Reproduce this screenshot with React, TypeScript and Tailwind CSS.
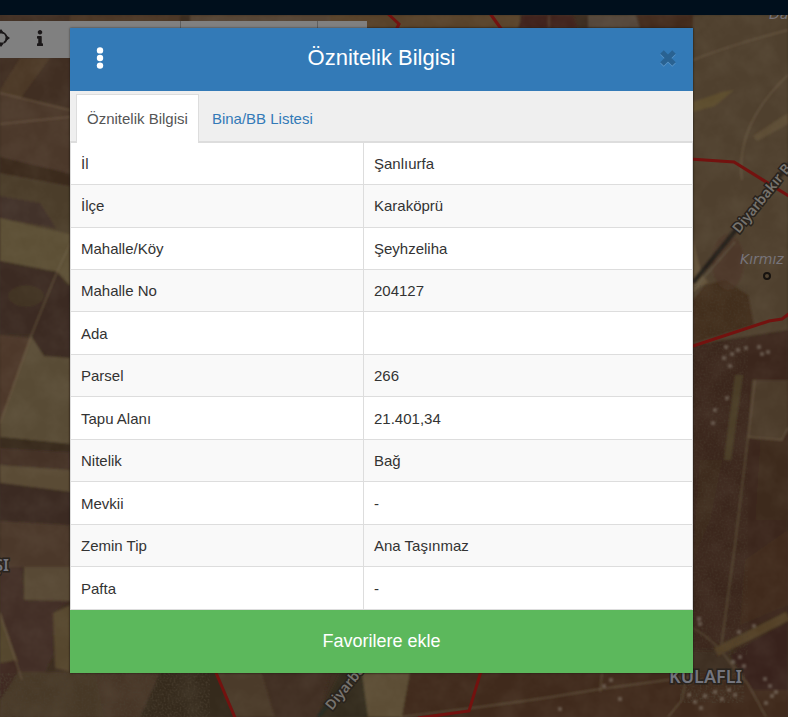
import React from 'react';
import { FaInfo } from 'react-icons/fa';

const attributes = [
  { label: 'İl', value: 'Şanlıurfa' },
  { label: 'İlçe', value: 'Karaköprü' },
  { label: 'Mahalle/Köy', value: 'Şeyhzeliha' },
  { label: 'Mahalle No', value: '204127' },
  { label: 'Ada', value: '' },
  { label: 'Parsel', value: '266' },
  { label: 'Tapu Alanı', value: '21.401,34' },
  { label: 'Nitelik', value: 'Bağ' },
  { label: 'Mevkii', value: '-' },
  { label: 'Zemin Tip', value: 'Ana Taşınmaz' },
  { label: 'Pafta', value: '-' },
];

const fields = [
  // west
  { points: '0,15 70,15 70,110 0,93', fill: '#402d21' },
  { points: '20,58 50,58 12,110 0,118 0,90', fill: '#4b3928' },
  { points: '0,93 70,110 70,174 0,157', fill: '#4b372a' },
  { points: '0,157 70,174 70,186 0,173', fill: '#3b291f' },
  { points: '0,173 70,186 70,234 0,218', fill: '#4c3c2b' },
  { points: '0,196 40,203 56,228 0,218', fill: '#43332a' },
  { points: '0,218 70,234 70,286 57,272 0,261', fill: '#5c4f36' },
  { points: '0,261 57,272 70,286 70,358 44,356 31,336 0,335', fill: '#3b2a20' },
  { points: '0,335 31,338 0,423', fill: '#4d3829' },
  { points: '31,336 44,356 70,358 70,444 0,437 0,423', fill: '#594b34' },
  { points: '0,437 70,444 70,452 0,448', fill: '#382b1e' },
  { points: '0,448 70,452 70,470 0,465', fill: '#453127' },
  { points: '0,465 70,470 70,492 0,483', fill: '#5a4c36' },
  { points: '0,483 70,492 70,525 0,521', fill: '#3b2a22' },
  { points: '0,521 70,525 70,567 0,567', fill: '#4c392a' },
  { points: '24,567 70,567 70,601 24,600', fill: '#594a35' },
  { points: '0,567 22,567 24,601 70,601 53,613 53,655 45,672 20,672 0,613', fill: '#422f25' },
  { points: '53,613 70,605 70,672 55,668', fill: '#56462f' },
  { points: '0,613 18,662 0,665', fill: '#55462f' },
  { points: '0,663 16,660 20,672 0,700', fill: '#3f2b20' },
  // south
  { points: '18,672 96,672 105,717 0,717 0,700', fill: '#473828' },
  { points: '95,673 178,673 145,717 105,717', fill: '#463527' },
  { points: '160,673 216,673 235,717 140,717', fill: '#352b1f' },
  { points: '216,673 262,673 275,717 235,717', fill: '#4c3a2a' },
  { points: '262,673 330,673 318,717 275,717', fill: '#412d21' },
  { points: '340,673 362,673 368,717 318,717', fill: '#302c1e' },
  { points: '362,673 410,673 402,717 368,717', fill: '#5b4e36' },
  { points: '410,673 788,673 788,717 402,717', fill: '#3f2b1e' },
  // north
  { points: '70,15 180,15 180,28 70,28', fill: '#4d3927' },
  { points: '190,15 330,15 330,28 190,28', fill: '#574534' },
  { points: '330,15 520,15 520,28 330,28', fill: '#58432c' },
  { points: '522,15 573,15 578,28 518,28', fill: '#40241a' },
  { points: '588,15 636,15 640,28 588,28', fill: '#54463a' },
  { points: '636,15 694,15 694,28 640,28', fill: '#432c1d' },
  // east
  { points: '693,15 788,15 788,330 693,345', fill: '#50412f' },
  { points: '693,102 722,92 734,90 715,106 693,112', fill: '#5d4d2f' },
  { points: '753,136 788,113 788,124 757,141', fill: '#5d4e35' },
  { points: '693,240 702,275 708,282 693,292', fill: '#64533a' },
  { points: '693,345 788,330 788,650 693,650', fill: '#3a281b' },
  { points: '705,285 725,280 748,295 754,325 693,343 693,300', fill: '#432d1d' },
  { points: '752,380 788,380 788,430 782,440 748,437', fill: '#4b3b2b' },
  { points: '735,375 743,375 731,460 724,460', fill: '#4c3c28' },
  { points: '700,460 722,460 710,520 693,560', fill: '#3e2b1c' },
  { points: '745,560 788,530 788,605 740,625', fill: '#412c1e' },
  { points: '760,440 788,440 788,520 755,520', fill: '#3d291c' },
  { points: '730,655 788,622 788,690 752,690', fill: '#38241b' },
];

const tracks = [
  'M0 93 L70 110',
  'M0 124 L70 117',
  'M70 244 L57 272 L31 336 L0 423',
  'M0 613 L22 680',
  'M549 15 V28',
  'M693 60 Q730 45 788 30',
  'M788 75 Q735 125 742 180',
  'M755 380 L748 437 L782 440 L788 428',
  'M748 437 L735 545 L721 648',
  'M693 628 Q716 641 732 665 L748 684 L766 717',
  'M400 717 Q520 703 600 689 L690 677',
  'M602 673 L600 692',
  'M685 685 L682 700 L668 717',
];

const houses = [
  [724, 345], [730, 352], [736, 348], [744, 346], [757, 345], [760, 352], [766, 350], [722, 356], [728, 364],
  [713, 408], [711, 421], [725, 396], [697, 617], [698, 622], [737, 630], [752, 624], [738, 655], [731, 660],
  [742, 664], [687, 693], [693, 700], [703, 694], [713, 690], [720, 697], [727, 688], [733, 693], [763, 677],
  [768, 684], [770, 694], [764, 701], [774, 690], [609, 678], [602, 684], [618, 697], [558, 707], [699, 706],
];

const SatelliteMap = () => (
  <svg
    className="absolute inset-0 h-full w-full bg-[#3d2e21]"
    viewBox="0 0 788 717"
    preserveAspectRatio="xMidYMid slice"
    aria-hidden="true"
  >
    <defs>
      <filter id="terrain" x="0" y="0" width="100%" height="100%">
        <feTurbulence type="fractalNoise" baseFrequency="0.04 0.04" numOctaves="4" seed="8" />
        <feColorMatrix values="0 0 0 0 0.42  0 0 0 0 0.37  0 0 0 0 0.27  0.9 0.5 0 0 -0.52" />
      </filter>
      <filter id="grain" x="0" y="0" width="100%" height="100%">
        <feTurbulence type="fractalNoise" baseFrequency="0.5" numOctaves="2" seed="3" />
        <feColorMatrix values="0 0 0 0 0.07  0 0 0 0 0.05  0 0 0 0 0.03  2.4 0 0 0 -0.98" />
      </filter>
      <filter id="soften">
        <feGaussianBlur stdDeviation="0.8" />
      </filter>
    </defs>

    <g filter="url(#soften)">
      {fields.map((field, index) => (
        <polygon key={index} points={field.points} fill={field.fill} />
      ))}
      <ellipse cx="26" cy="296" rx="18" ry="11" fill="#4c3e2c" opacity="0.3" />
      <ellipse cx="728" cy="262" rx="16" ry="28" fill="#4b3426" opacity="0.6" />
      {tracks.map((d) => (
        <path key={d} d={d} fill="none" stroke="#7a6850" strokeWidth="1.4" opacity="0.5" />
      ))}
      <path d="M716 652 L788 616" stroke="#523f26" strokeWidth="9" />
      <path d="M693 283 L790 163" stroke="#28241d" strokeWidth="5" />
      <path d="M693 290 L735 242" stroke="#68604f" strokeWidth="1" />
      <path d="M318 717 L362 664" stroke="#282b20" strokeWidth="4" />
    </g>

    <rect width="788" height="717" filter="url(#terrain)" opacity="0.15" />
    <rect y="673" width="210" height="44" filter="url(#grain)" opacity="0.7" />
    <rect x="693" y="285" width="55" height="370" filter="url(#grain)" opacity="0.4" />
    <rect x="680" y="673" width="65" height="30" filter="url(#grain)" opacity="0.8" />

    <g fill="#8b8174" opacity="0.5" filter="url(#soften)">
      {houses.map(([x, y]) => (
        <rect key={`${x}-${y}`} x={x} y={y} width="4" height="4" />
      ))}
    </g>

    <g fill="none" stroke="#73120f" strokeWidth="3">
      <path d="M386 12 L399 24 L396 30" />
      <path d="M489 12 L502 30" />
      <path d="M690 159 L734 162 L792 198" />
      <path d="M690 347 L769 321 L782 319 L790 313" />
      <path d="M214 668 L236 720" />
      <path d="M482 668 L469 711 L418 718" />
    </g>

    <g
      fill="#77736e"
      stroke="#29231d"
      strokeWidth="3"
      paintOrder="stroke"
      fontFamily='"Noto Sans", sans-serif'
      fontWeight="600"
    >
      <text x="739" y="234" fontSize="14" transform="rotate(-51 739 234)">Diyarbakır B</text>
      <text x="332" y="711" fontSize="14" transform="rotate(-51 332 711)">Diyarbakır</text>
      <text x="669" y="683" fontSize="18" fill="#74757d">KULAFLI</text>
      <text x="9" y="571" fontSize="16" fill="#74757d" textAnchor="end">ŞI</text>
    </g>
    <g fill="#77747a" fontStyle="italic" fontFamily='"DejaVu Sans", sans-serif' fontSize="14">
      <text x="740" y="264">Kırmız</text>
      <text x="769" y="19">Da</text>
    </g>
    <circle cx="767" cy="276" r="3" fill="none" stroke="#17130f" strokeWidth="2" />
  </svg>
);

const MapToolbar = () => (
  <div className="absolute left-0 top-[21px] flex h-[37px] w-[367px] bg-[#808080] text-[#1b1819]">
    <div className="flex w-[181px] items-center border-r border-[#606060] pb-1">
      <button type="button" aria-label="Konum" className="w-[21px]">
        <svg className="-ml-2 h-[18px] w-[18px]" viewBox="0 0 16 16" fill="none" stroke="currentColor" aria-hidden="true">
          <circle cx="8" cy="8" r="5" strokeWidth="1.5" strokeDasharray="5 3" />
          <path d="M8 0 L11 4 H5 Z M8 16 L11 12 H5 Z M0 8 L4 5 V11 Z M16 8 L12 5 V11 Z" fill="currentColor" stroke="none" />
        </svg>
      </button>
      <button type="button" aria-label="Bilgi" className="flex w-[38px] justify-center">
        <FaInfo className="h-4 w-4" />
      </button>
    </div>
    <div className="w-[137px] border-r border-[#606060]"></div>
  </div>
);

const App = () => {
  return (
    <div className="relative min-h-screen overflow-hidden font-['Liberation_Sans',Arial,sans-serif] text-[15px] leading-[21px] text-[#333333]">
      <SatelliteMap />
      <div className="absolute inset-x-0 top-0 h-[15px] bg-[#000f1c]"></div>
      <MapToolbar />

      <div className="relative pb-11 pl-[70px] pr-[95px] pt-7">
        <div role="dialog" aria-labelledby="dialog-title" className="bg-white shadow-[0_0_2px_rgba(0,0,0,0.6)]">
          <div className="flex h-[63px] items-center justify-between bg-[#337ab7] px-[15px] pb-[3px] text-white">
            <button type="button" aria-label="Menü" className="flex w-[30px] justify-center">
              <svg className="h-[22px] w-2" viewBox="0 0 8 22" fill="currentColor" aria-hidden="true">
                <circle cx="4" cy="3.4" r="3.2" />
                <circle cx="4" cy="11" r="3.2" />
                <circle cx="4" cy="18.6" r="3.2" />
              </svg>
            </button>
            <h4 id="dialog-title" className="text-[22px] leading-[26px]">Öznitelik Bilgisi</h4>
            <button type="button" aria-label="Kapat" className="flex w-[30px] justify-end">
              <svg className="h-[18px] w-[18px]" viewBox="0 0 18 18" fill="none" strokeWidth="5" aria-hidden="true">
                <path d="M2 4 L14 16 M14 4 L2 16" stroke="#5c96c8" />
                <path d="M2 3 L14 15 M14 3 L2 15" stroke="#296292" />
              </svg>
            </button>
          </div>

          <div role="tablist" className="flex h-[52px] items-end border-b-2 border-[#dddddd] bg-[#efefef] pl-[6px]">
            <button
              type="button"
              role="tab"
              aria-selected="true"
              className="-mb-[2px] h-[49px] border border-b-0 border-[#dddddd] bg-white px-[10px] pb-[2px] text-[#555555]"
            >
              Öznitelik Bilgisi
            </button>
            <button type="button" role="tab" aria-selected="false" className="h-[45px] px-[13px] text-[#337ab7]">
              Bina/BB Listesi
            </button>
          </div>

          <table className="h-[467px] w-full border-collapse border border-t-0 border-[#dddddd]">
            <tbody>
              {attributes.map((item) => (
                <tr key={item.label} className="border-b border-[#dddddd] even:bg-[#f9f9f9]">
                  <th scope="row" className="w-[293px] border-r border-[#dddddd] px-[10px] text-left font-normal">
                    {item.label}
                  </th>
                  <td className="px-[10px]">{item.value}</td>
                </tr>
              ))}
            </tbody>
          </table>

          <button type="button" className="h-[63px] w-full bg-[#5cb85c] pb-0.5 text-lg text-white">
            Favorilere ekle
          </button>
        </div>
      </div>
    </div>
  );
};

export default App;
